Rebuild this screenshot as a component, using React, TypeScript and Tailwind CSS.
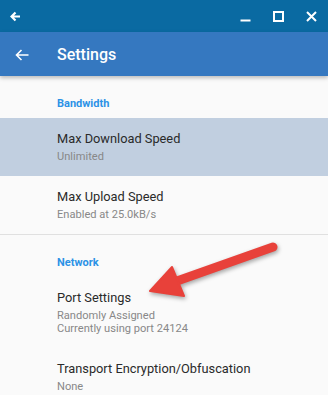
import React from "react";

const font = { fontFamily: "Roboto, 'Noto Sans', sans-serif" };

function Row({ title, lines, active }: { title: string; lines: string[]; active?: boolean }) {
  return (
    <div className={`pl-[57px] pt-[12px] pb-[13.5px] ${active ? "bg-[#c1cfe0]" : ""}`}>
      <p className="text-[12.8px] leading-[18px] text-[#2a2a2a]">{title}</p>
      <div className="mt-[1.5px]">
        {lines.map((l) => (
          <p key={l} className="text-[11.1px] leading-[13px] text-[#888]">
            {l}
          </p>
        ))}
      </div>
    </div>
  );
}

function Header({ label }: { label: string }) {
  return (
    <p className="pl-[57px] pt-[21px] pb-[7px] text-[11px] font-bold leading-[14px] text-[#2c92e6]">
      {label}
    </p>
  );
}

export default function App() {
  return (
    <div className="relative h-[395px] w-[328px] overflow-hidden bg-[#fafafa]" style={font}>
      {/* window title bar */}
      <div className="flex h-[32px] items-center bg-[#0a6aa2] px-[10px] text-white">
        <svg width="11" height="11" viewBox="0 0 11 11" fill="none" stroke="white" strokeWidth="2.2">
          <path d="M10 5.5H2M5.5 1.5L1.5 5.5l4 4" />
        </svg>
        <div className="ml-auto flex items-center gap-[22px] pr-[1px]">
          <svg width="11" height="11" viewBox="0 0 11 11" stroke="white" strokeWidth="2">
            <path d="M0.5 9.5h10" />
          </svg>
          <svg width="11" height="11" viewBox="0 0 11 11" fill="none" stroke="white" strokeWidth="2">
            <rect x="1" y="1" width="9" height="9" />
          </svg>
          <svg width="11" height="11" viewBox="0 0 11 11" stroke="white" strokeWidth="2">
            <path d="M1 1l9 9M10 1l-9 9" />
          </svg>
        </div>
      </div>

      {/* app bar */}
      <div className="relative z-10 flex h-[44px] items-center bg-[#3578c0] pt-[2px] shadow-[0_2px_4px_rgba(0,0,0,0.25)]">
        <svg className="ml-[15px]" width="14" height="12" viewBox="0 0 14 12" fill="none" stroke="white" strokeWidth="1.6">
          <path d="M13.5 6H1.5M6.5 1L1.5 6l5 5" />
        </svg>
        <span className="ml-[28px] text-[16px] font-medium text-white">Settings</span>
      </div>

      <Header label="Bandwidth" />
      <Row title="Max Download Speed" lines={["Unlimited"]} active />
      <Row title="Max Upload Speed" lines={["Enabled at 25.0kB/s"]} />
      <div className="h-px bg-[#e0e0e0]" />
      <Header label="Network" />
      <Row title="Port Settings" lines={["Randomly Assigned", "Currently using port 24124"]} />
      <Row title="Transport Encryption/Obfuscation" lines={["None"]} />

      {/* annotation arrow */}
      <svg
        className="pointer-events-none absolute left-0 top-0"
        width="328"
        height="395"
        viewBox="0 0 328 395"
        style={{ filter: "drop-shadow(1px 2px 2px rgba(0,0,0,0.35))" }}
      >
        <path d="M273 247L177 281" stroke="#e8413a" strokeWidth="9" strokeLinecap="round" />
        <path d="M150 291L172 267L184 296Z" fill="#e8413a" stroke="#e8413a" strokeWidth="2" strokeLinejoin="round" />
      </svg>
    </div>
  );
}
